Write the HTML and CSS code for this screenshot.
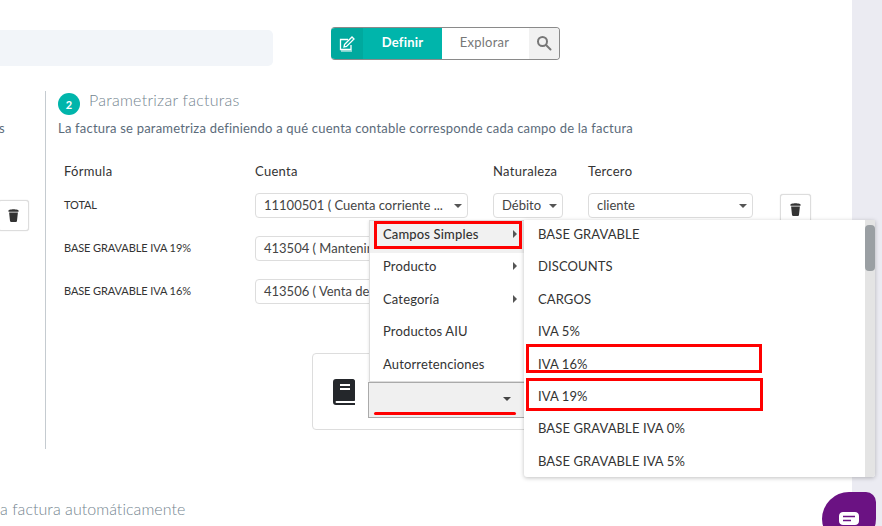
FILE: index.html
```html
<!DOCTYPE html>
<html lang="es">
<head>
<meta charset="utf-8">
<title>Parametrizar facturas</title>
<link rel="stylesheet" href="styles.css">
</head>
<body>
<div class="page">
  <main class="main">
    <div class="toolbar">
      <div class="searchbar"></div>
      <div class="toggle">
        <span class="toggle-icon">
          <svg width="16" height="16" viewBox="0 0 16 16" fill="none" stroke="#fff" stroke-width="1.3"><path d="M12 9v4.500H1.500V3.500H9"/><path d="M5.500 8.500L13 1l2 2-7.500 7.500-2.500.5z"/><path d="M2 15h11" stroke-width="1"/></svg>
        </span>
        <span class="toggle-on">Definir</span>
        <span class="toggle-off">Explorar</span>
        <span class="toggle-search">
          <svg width="16" height="16" viewBox="0 0 16 16" fill="none" stroke="#777" stroke-width="2"><circle cx="6.500" cy="6.500" r="4.500"/><path d="M10 10l4.500 4.500" stroke-linecap="round"/></svg>
        </span>
      </div>
    </div>

    <div class="content">
      <div class="side">
        <div class="side-text">s</div>
        <button class="trash side-trash" type="button">
          <svg class="trash-icon" viewBox="0 0 12 14"><path d="M4 .5C5 0 7 0 8 .5c1.500.1 3 .5 3.500 1V3H.5V1.500C1 1 2.500.6 4 .5zM1.200 3.700h9.600L9.800 13c0 .6-.5 1-1 1H3.200c-.5 0-1-.4-1-1z"/></svg>
        </button>
      </div>
      <section class="panel">
        <header class="head">
          <span class="badge">2</span>
          <h2 class="title">Parametrizar facturas</h2>
        </header>
        <p class="desc">La factura se parametriza definiendo a qué cuenta contable corresponde cada campo de la factura</p>

        <div class="grid grid-head">
          <span>Fórmula</span><span>Cuenta</span><span>Naturaleza</span><span>Tercero</span><span></span>
        </div>
        <div class="grid grid-row">
          <span class="formula">TOTAL</span>
          <span class="select">11100501 ( Cuenta corriente ...</span>
          <span class="select">Débito</span>
          <span class="select">cliente</span>
          <button class="trash" type="button">
            <svg class="trash-icon" viewBox="0 0 12 14"><path d="M4 .5C5 0 7 0 8 .5c1.500.1 3 .5 3.500 1V3H.5V1.500C1 1 2.500.6 4 .5zM1.200 3.700h9.600L9.800 13c0 .6-.5 1-1 1H3.200c-.5 0-1-.4-1-1z"/></svg>
          </button>
        </div>
        <div class="grid grid-row">
          <span class="formula">BASE GRAVABLE IVA 19%</span>
          <span class="select">413504 ( Mantenir</span>
        </div>
        <div class="grid grid-row">
          <span class="formula">BASE GRAVABLE IVA 16%</span>
          <span class="select">413506 ( Venta de</span>
        </div>

        <div class="card">
          <svg class="book" viewBox="0 0 22 26"><path fill-rule="evenodd" d="M3 0h17c1 0 2 1 2 2v19c0 .6-.4 1-1 1H4c-1 0-1.500.5-1.500 1S3 24 4 24h18v2H3c-2 0-3-1-3-3V3c0-2 1-3 3-3zM7 5v2h10V5zM7 9v2h10V9z"/></svg>
        </div>
      </section>
    </div>

    <p class="auto">a factura automáticamente</p>
  </main>
  <aside class="gutter"></aside>
</div>

<div class="dropdown">
  <div class="dropdown-item active">Campos Simples<i class="caret"></i></div>
  <div class="dropdown-item">Producto<i class="caret"></i></div>
  <div class="dropdown-item">Categoría<i class="caret"></i></div>
  <div class="dropdown-item">Productos AIU</div>
  <div class="dropdown-item">Autorretenciones</div>
</div>
<div class="open-select"><i class="select-caret"></i></div>
<div class="submenu">
  <ul class="sublist">
    <li>BASE GRAVABLE</li>
    <li>DISCOUNTS</li>
    <li>CARGOS</li>
    <li>IVA 5%</li>
    <li>IVA 16%</li>
    <li>IVA 19%</li>
    <li>BASE GRAVABLE IVA 0%</li>
    <li>BASE GRAVABLE IVA 5%</li>
  </ul>
  <div class="scrolltrack"><div class="scrollthumb"></div></div>
</div>

<div class="mark mark-a"></div>
<div class="mark mark-b"></div>
<div class="mark mark-c"></div>
<div class="mark-line"></div>

<div class="chat">
  <svg width="20" height="16" viewBox="0 0 20 16"><path fill="#fff" d="M4 0h12c2 0 4 1.500 4 4v5c0 2.500-2 4-4 4H4c-2 0-4-1.500-4-4V4c0-2.500 2-4 4-4z"/><path d="M4 4.500h12M4 8.500h8" stroke="#6b1283" stroke-width="1.600"/></svg>
</div>
</body>
</html>
```
FILE: styles.css
```css
* { box-sizing: border-box; }
html, body { margin: 0; height: 100%; overflow: hidden; }
body { font-family: Lato, "Open Sans", sans-serif; font-size: 13px; color: #333; background: #ebebf2; }

.page { display: flex; width: 882px; height: 526px; }
.main { width: 852px; height: 526px; background: #fff; overflow: hidden; }
.gutter { flex: 1; }

.toolbar { display: flex; align-items: flex-start; gap: 58px; height: 91px; padding-top: 27px; }
.searchbar { width: 273px; height: 36px; margin-top: 3px; background: #f2f5f9; border-radius: 0 5px 5px 0; }

.toggle { display: flex; width: 229px; height: 33px; border: 1px solid #8a8a8a; border-left: 0; border-radius: 4px; overflow: hidden; }
.toggle-icon { width: 32px; margin: -1px 0; display: flex; align-items: center; justify-content: center; background: #00a99e; }
.toggle-on { width: 79px; margin: -1px 0; padding-bottom: 3px; display: flex; align-items: center; justify-content: center; background: #00b5ab; color: #fff; font-weight: 700; letter-spacing: .2px; }
.toggle-off { width: 87px; padding: 0 2px 3px 0; display: flex; align-items: center; justify-content: center; color: #777; letter-spacing: .25px; }
.toggle-search { flex: 1; padding-bottom: 2px; display: flex; align-items: center; justify-content: center; background: #f1f1f1; }

.content { display: flex; height: 358px; }
.side { width: 45px; flex: none; overflow: hidden; }
.side-text { margin-top: 28px; height: 18px; margin-left: -1px; color: #5b6b7a; line-height: 18px; }
.trash { width: 31px; height: 31px; padding: 0; margin-top: 1px; border: 1px solid #ddd; border-radius: 3px; background: #fff; display: flex; align-items: center; justify-content: center; box-shadow: 0 0 1px #ccc; }
.side .side-trash { margin-top: 63px; margin-left: -2px; }
.trash-icon { width: 11px; height: 13px; fill: #333; }
.panel { flex: 1; border-left: 1px solid #c5cbd0; padding-left: 12px; min-width: 0; }

.head { display: flex; align-items: center; gap: 9px; height: 24px; }
.badge { width: 22px; height: 22px; margin-top: 2px; border-radius: 50%; background: #00b5ab; color: #fff; display: flex; align-items: center; justify-content: center; font-size: 11px; font-weight: 700; }
.title { margin: 0 0 8px; font-size: 16px; font-weight: 300; color: #74858f; letter-spacing: .25px; }
.desc { margin: 4px 0 0; height: 18px; line-height: 18px; color: #5b6b7a; letter-spacing: .205px; }

.grid { display: grid; grid-template-columns: 191px 238px 95px 192px 32px; padding-left: 6px; }
.grid-head { margin-top: 25px; height: 31px; line-height: 18px; color: #333; align-items: start; letter-spacing: .3px; }
.grid-row { height: 43px; align-items: start; }
.formula { font-size: 11px; line-height: 23px; color: #333; letter-spacing: -.1px; }
.select { display: block; height: 25px; line-height: 23px; padding-left: 8px; border: 1px solid #ddd; border-radius: 4px; background: #fff; color: #444; white-space: nowrap; overflow: hidden; position: relative; }
.grid-row .select:nth-child(2) { width: 213px; }
.grid-row .select:nth-child(3) { width: 70px; }
.grid-row .select:nth-child(4) { width: 165px; }
.select::after { content: ""; position: absolute; right: 5px; top: 10px; border: 4px solid transparent; border-top-color: #555; border-bottom: 0; }

.card { margin-top: 31px; margin-left: 254px; width: 300px; height: 77px; border: 1px solid #ddd; border-radius: 4px; display: flex; align-items: center; padding-left: 20px; }
.book { width: 22px; height: 26px; fill: #24272b; }

.auto { margin: 50px 0 0; font-size: 16px; font-weight: 300; color: #74858f; letter-spacing: .05px; }

.dropdown { position: absolute; left: 369px; top: 220px; width: 155px; height: 162px; background: #fff; border: 1px solid #ddd; border-right: 0; box-shadow: 0 1px 3px rgba(0,0,0,.12); }
.dropdown-item { height: 32.400px; line-height: 26px; padding-left: 13px; font-size: 13px; color: #333; position: relative; letter-spacing: .15px; }
.dropdown-item.active { background: #f1f1f1; font-weight: 500; }
.caret { position: absolute; right: 7px; top: 9px; border: 4px solid transparent; border-left-color: #555; border-right: 0; }

.open-select { position: absolute; left: 368px; top: 382px; width: 157px; height: 36px; background: #f0f0f0; border: 1px solid #aaa; border-right: 0; }
.select-caret { position: absolute; right: 14px; top: 14px; border: 4px solid transparent; border-top-color: #444; border-bottom: 0; }

.submenu { position: absolute; left: 524px; top: 220px; width: 351px; height: 257px; background: #fff; display: flex; box-shadow: 0 1px 4px rgba(0,0,0,.25); border-radius: 0 0 3px 3px; overflow: hidden; }
.sublist { flex: 1; margin: 0; padding: 0; list-style: none; }
.sublist li { height: 32.400px; line-height: 29px; padding-left: 14px; font-size: 13px; color: #333; letter-spacing: .1px; }
.scrolltrack { width: 10px; background: #e4e4e4; padding-top: 5px; }
.scrollthumb { height: 46px; background: #9a9fa3; border-radius: 4px; }

.mark { position: absolute; border: 3px solid #f00; }
.mark-a { left: 374px; top: 221px; width: 148px; height: 28px; }
.mark-b { left: 526px; top: 344px; width: 236px; height: 29px; }
.mark-c { left: 526px; top: 378px; width: 237px; height: 33px; }
.mark-line { position: absolute; left: 374px; top: 412px; width: 142px; height: 3px; border-radius: 2px; background: #f00; }

.chat { position: absolute; left: 822px; top: 492px; width: 54px; height: 54px; background: #6b1283; border-radius: 50% 10px 50% 50%; display: flex; justify-content: center; padding-top: 20px; }
```
